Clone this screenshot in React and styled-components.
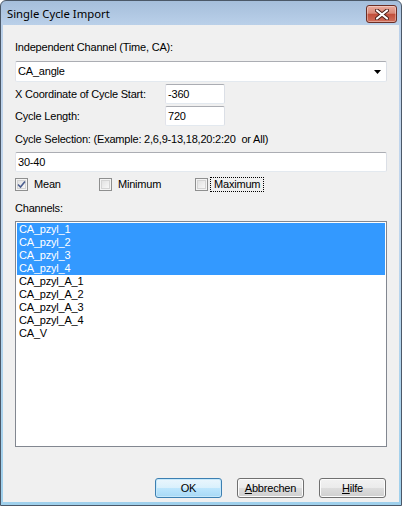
import styled, { createGlobalStyle } from "styled-components"

const GlobalStyle = createGlobalStyle`
  html, body {
    margin: 0;
    padding: 0;
    background: #ffffff;
  }
  body {
    font-family: "Liberation Sans", Arial, sans-serif;
    font-size: 11px;
    letter-spacing: -0.2px;
    color: #000;
  }
  * {
    box-sizing: border-box;
  }
`

const Window = styled.div`
  width: 402px;
  height: 506px;
  border: 1px solid #4b5868;
  border-radius: 6px 6px 0 0;
  background: linear-gradient(#a5bedb, #bad0e9 24px, #c3d7ed 200px, #9fd0ec);
  display: flex;
  flex-direction: column;
  overflow: hidden;
`

const TitleBar = styled.div`
  height: 24px;
  flex-shrink: 0;
  display: flex;
  align-items: flex-start;
  justify-content: space-between;
  padding: 0 4px 0 6px;
`

const Title = styled.span`
  font-family: "Noto Sans", "Segoe UI", sans-serif;
  font-size: 11.3px;
  letter-spacing: 0;
  line-height: 16px;
  margin-top: 5px;
`

const CloseButton = styled.div`
  width: 31px;
  height: 18px;
  margin-top: 4px;
  border: 1px solid #6b2e25;
  border-radius: 3px;
  background: linear-gradient(#eaaa9c, #d98a79 45%, #c24f3b 52%, #d06f5b);
  box-shadow: inset 0 0 0 1px rgba(255, 255, 255, 0.35);
  display: flex;
  align-items: center;
  justify-content: center;
`

const Client = styled.div`
  flex: 1;
  margin: 0 2px 3px;
  background: #f0f0f0;
  padding: 0 12px;
  display: flex;
  flex-direction: column;
`

const Label = styled.div`
  line-height: 13px;
  height: 13px;
  margin-top: ${(p) => p.$top || 0}px;
  white-space: nowrap;
`

const TextBox = styled.div`
  height: ${(p) => p.$height || 20}px;
  width: ${(p) => (p.$width ? `${p.$width}px` : "100%")};
  margin-top: ${(p) => p.$top || 0}px;
  background: #fff;
  border: 1px solid;
  border-color: #abadb3 #dbdfe6 #e3e9ef #e2e3ea;
  border-radius: 2px;
  padding: 0 2px;
  display: flex;
  align-items: center;
  justify-content: space-between;
  line-height: 13px;
`

const Arrow = styled.svg`
  margin-right: 3px;
`

const FieldRow = styled.div`
  display: flex;
  align-items: center;
  margin-top: ${(p) => p.$top || 0}px;
`

const FieldLabel = styled.div`
  width: 150px;
  line-height: 13px;
`

const CheckRow = styled.div`
  display: flex;
  align-items: center;
  height: 15px;
  margin-top: ${(p) => p.$top || 0}px;
`

const CheckItem = styled.div`
  display: flex;
  align-items: center;
  width: ${(p) => p.$width || 90}px;
`

const Box = styled.div`
  width: 13px;
  height: 13px;
  border: 1px solid #8e8f8f;
  background: linear-gradient(135deg, #dcdcdc, #fdfdfd);
  box-shadow: inset 0 0 0 1px #f4f4f4, inset 0 0 0 2px #d4d4d4;
  display: flex;
  align-items: center;
  justify-content: center;
`

const CheckText = styled.span`
  margin-left: 2px;
  padding: 0 3px;
  line-height: 13px;
  border: 1px dotted ${(p) => (p.$focus ? "#000" : "transparent")};
`

const ListBox = styled.div`
  height: 226px;
  margin-top: ${(p) => p.$top || 0}px;
  background: #fff;
  border: 1px solid #828790;
  padding: 1px;
`

const ListItem = styled.div`
  height: 13px;
  line-height: 13px;
  padding-left: 2px;
  background: ${(p) => (p.$selected ? "#3399ff" : "transparent")};
  color: ${(p) => (p.$selected ? "#fff" : "#000")};
`

const ButtonRow = styled.div`
  display: flex;
  justify-content: flex-end;
  gap: 15px;
  margin-top: ${(p) => p.$top || 0}px;
  padding-right: 1px;
`

const Button = styled.div`
  width: 67px;
  height: 20px;
  border: 1px solid ${(p) => (p.$default ? "#3c7fb1" : "#707070")};
  border-radius: 3px;
  background: ${(p) =>
    p.$default
      ? "linear-gradient(#eaf6fd, #d9f0fc 50%, #bee6fd 50%, #a7d9f5)"
      : "linear-gradient(#f2f2f2, #ebebeb 50%, #dddddd 50%, #cfcfcf)"};
  box-shadow: inset 0 0 0 1px ${(p) => (p.$default ? "#c5e8fb" : "#fcfcfc")};
  display: flex;
  align-items: center;
  justify-content: center;
  line-height: 13px;
`

const Key = styled.span`
  text-decoration: underline;
`

const Check = ({ checked, label, width, focus }) => (
  <CheckItem $width={width}>
    <Box>
      {checked && (
        <svg width="9" height="9" viewBox="0 0 9 9">
          <path d="M1 4.5 L3.5 7 L8 1.5" fill="none" stroke="#4a5d8e" strokeWidth="1.6" />
        </svg>
      )}
    </Box>
    <CheckText $focus={focus}>{label}</CheckText>
  </CheckItem>
)

const channels = [
  ["CA_pzyl_1", true],
  ["CA_pzyl_2", true],
  ["CA_pzyl_3", true],
  ["CA_pzyl_4", true],
  ["CA_pzyl_A_1", false],
  ["CA_pzyl_A_2", false],
  ["CA_pzyl_A_3", false],
  ["CA_pzyl_A_4", false],
  ["CA_V", false],
]

const App = () => {
  return (
    <>
      <GlobalStyle />
      <Window>
        <TitleBar>
          <Title>Single Cycle Import</Title>
          <CloseButton>
            <svg width="14" height="11" viewBox="0 0 14 11">
              <path d="M2 1.5 L12 9.5 M12 1.5 L2 9.5" stroke="#4a1e18" strokeWidth="4" strokeLinecap="round" />
              <path d="M2 1.5 L12 9.5 M12 1.5 L2 9.5" stroke="#ffffff" strokeWidth="2.2" strokeLinecap="round" />
            </svg>
          </CloseButton>
        </TitleBar>
        <Client>
          <Label $top={16}>Independent Channel (Time, CA):</Label>
          <TextBox $top={7} $height={21}>
            <span>CA_angle</span>
            <Arrow width="7" height="4" viewBox="0 0 7 4">
              <polygon points="0,0 7,0 3.5,4" fill="#000" />
            </Arrow>
          </TextBox>
          <FieldRow $top={2}>
            <FieldLabel>X Coordinate of Cycle Start:</FieldLabel>
            <TextBox $width={60}>-360</TextBox>
          </FieldRow>
          <FieldRow $top={2}>
            <FieldLabel>Cycle Length:</FieldLabel>
            <TextBox $width={60}>720</TextBox>
          </FieldRow>
          <Label $top={7}>Cycle Selection: (Example: 2,6,9-13,18,20:2:20&nbsp; or All)</Label>
          <TextBox $top={6}>30-40</TextBox>
          <CheckRow $top={5}>
            <Check checked label="Mean" width={84} />
            <Check label="Minimum" width={96} />
            <Check label="Maximum" focus />
          </CheckRow>
          <Label $top={10}>Channels:</Label>
          <ListBox $top={6}>
            {channels.map(([name, selected]) => (
              <ListItem key={name} $selected={selected}>
                {name}
              </ListItem>
            ))}
          </ListBox>
          <ButtonRow $top={31}>
            <Button $default>OK</Button>
            <Button>
              <span>
                <Key>A</Key>bbrechen
              </span>
            </Button>
            <Button>
              <span>
                <Key>H</Key>ilfe
              </span>
            </Button>
          </ButtonRow>
        </Client>
      </Window>
    </>
  )
}

export default App
